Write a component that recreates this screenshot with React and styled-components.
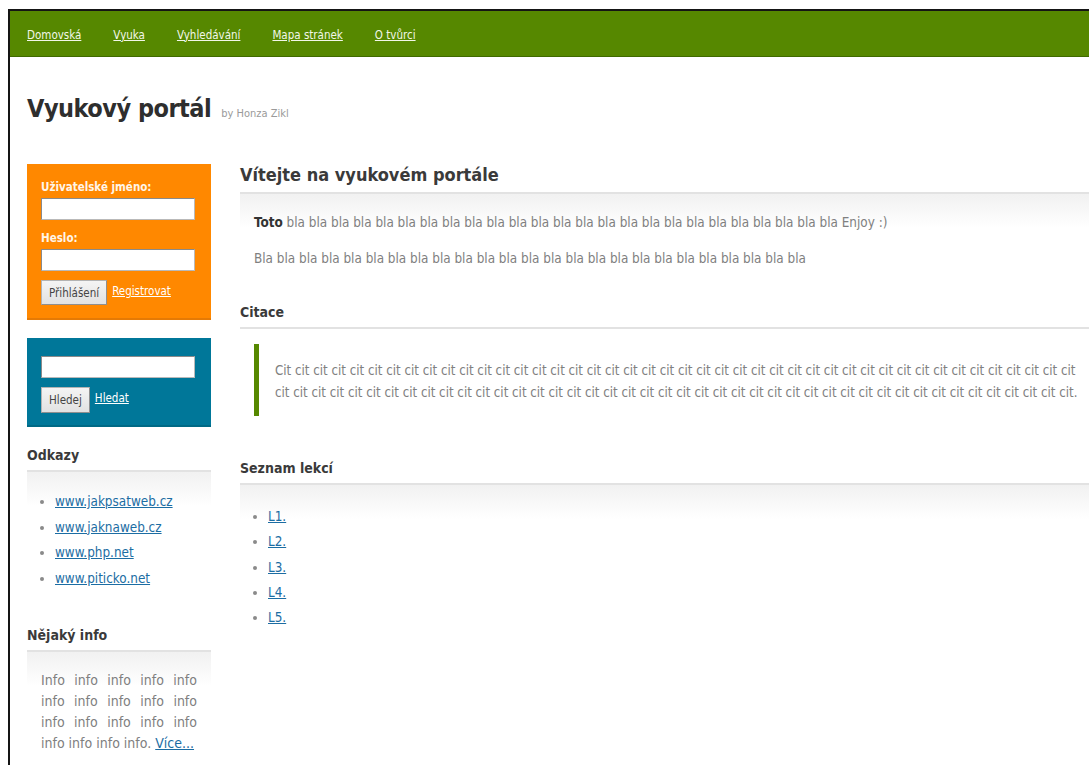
import React from 'react';
import styled, { createGlobalStyle } from 'styled-components';

const GlobalStyle = createGlobalStyle`
  html, body {
    overflow: hidden;
  }
  body {
    margin: 9px 0 0 8px;
    background: #fff;
    font-family: "DejaVu Sans Condensed", "DejaVu Sans", Tahoma, sans-serif;
    color: #7d7d7d;
  }
`;

const Frame = styled.div`
  width: 1107px;
  border-left: 2px solid #151515;
  border-top: 2px solid #151515;
  min-height: 800px;
`;

const NavBar = styled.nav`
  display: flex;
  align-items: center;
  gap: 32px;
  height: 45px;
  padding: 0 17px;
  background: #568800;
  border-bottom: 1px solid #3f6a00;
`;

const NavLink = styled.a`
  color: #f2f7e8;
  font-size: 11.5px;
  text-decoration: underline;
  margin-top: 2px;
`;

const Body = styled.div`
  padding: 0 17px;
`;

const Header = styled.header`
  display: flex;
  align-items: baseline;
  gap: 10px;
  padding-top: 37px;
  height: 70px;
  box-sizing: border-box;
  margin-bottom: 37px;
`;

const Title = styled.h1`
  margin: 0;
  font-size: 25px;
  line-height: 30px;
  font-weight: bold;
  color: #2e2e2e;
  letter-spacing: -0.5px;
`;

const Byline = styled.span`
  font-size: 11px;
  color: #9a9a9a;
`;

const Columns = styled.div`
  display: flex;
  align-items: flex-start;
  gap: 29px;
`;

const Sidebar = styled.aside`
  width: 184px;
  flex-shrink: 0;
`;

const Panel = styled.form`
  display: flex;
  flex-direction: column;
  align-items: flex-start;
  padding: ${p => p.$top}px 14px ${p => p.$bottom}px;
  background: ${p => p.$bg};
  border-bottom: 2px solid ${p => p.$edge};
  margin-bottom: ${p => p.$gap || 0}px;
`;

const Label = styled.label`
  font-size: 11.5px;
  line-height: 16px;
  font-weight: bold;
  color: #fff5e8;
  margin-bottom: 3px;
`;

const TextInput = styled.input`
  box-sizing: border-box;
  width: 154px;
  height: 22px;
  margin: 0 0 ${p => p.$after}px;
  border: 1px solid #b9b9b9;
  border-top-color: #8a8a8a;
  border-left-color: #8a8a8a;
  background: #fff;
`;

const ActionRow = styled.div`
  display: flex;
  align-items: flex-start;
  gap: 5px;
`;

const Button = styled.button`
  box-sizing: border-box;
  height: ${p => p.$h}px;
  padding: 0 7px;
  font-family: inherit;
  font-size: 11.5px;
  color: #444;
  background: linear-gradient(#f4f4f4, #e2e2e2);
  border: 1px solid #b3b3b3;
  border-right-color: #8f8f8f;
  border-bottom-color: #8f8f8f;
`;

const PanelLink = styled.a`
  font-size: 11.5px;
  line-height: 22px;
  color: #fff;
  text-decoration: underline;
`;

const Heading = styled.h3`
  margin: ${p => p.$top}px 0 0;
  padding-bottom: ${p => p.$pad || 5}px;
  font-size: ${p => p.$size || 14}px;
  line-height: ${p => p.$lh || 20}px;
  font-weight: bold;
  color: #3a3a3a;
  border-bottom: 2px solid #e2e2e2;
`;

const Shade = styled.div`
  padding: ${p => p.$top}px ${p => p.$side || 0}px 0;
  background: linear-gradient(#f1f1f1, #fff 34px);
`;

const LinkList = styled.ul`
  margin: 0;
  padding-left: ${p => p.$indent}px;
  list-style: disc;
  color: #8a8a8a;
  font-size: 13.4px;
  line-height: ${p => p.$lh}px;
`;

const ItemLink = styled.a`
  color: #1c6da3;
  text-decoration: underline;
`;

const InfoText = styled.p`
  margin: 0;
  font-size: 14px;
  line-height: 21px;
  text-align: justify;
  color: #808080;
`;

const Main = styled.main`
  flex: 1;
  min-width: 0;
`;

const Para = styled.p`
  margin: 0 0 ${p => p.$after}px;
  padding-left: 14px;
  font-size: 13.4px;
  line-height: 20px;
  color: #808080;

  strong {
    color: #333;
  }
`;

const Quote = styled.blockquote`
  margin: 15px 0 0 14px;
  padding: 16px 8px 12px 16px;
  border-left: 5px solid #568800;
  font-size: 13.2px;
  line-height: 22px;
  color: #808080;
`;

const bla = (n) => Array(n).fill('bla').join(' ');
const cit = Array(87).fill('cit').join(' ');

const navItems = ['Domovská', 'Vyuka', 'Vyhledávání', 'Mapa stránek', 'O tvůrci'];
const links = ['www.jakpsatweb.cz', 'www.jaknaweb.cz', 'www.php.net', 'www.piticko.net'];
const lessons = ['L1.', 'L2.', 'L3.', 'L4.', 'L5.'];

export default function App() {
  return (
    <Frame>
      <GlobalStyle />
      <NavBar>
        {navItems.map(item => <NavLink key={item} href="#">{item}</NavLink>)}
      </NavBar>
      <Body>
        <Header>
          <Title>Vyukový portál</Title>
          <Byline>by Honza Zikl</Byline>
        </Header>
        <Columns>
          <Sidebar>
            <Panel $bg="#ff8800" $edge="#e57a05" $top={15} $bottom={13} $gap={18}>
              <Label>Uživatelské jméno:</Label>
              <TextInput $after={10} />
              <Label>Heslo:</Label>
              <TextInput type="password" $after={9} />
              <ActionRow>
                <Button type="button" $h={25}>Přihlášení</Button>
                <PanelLink href="#">Registrovat</PanelLink>
              </ActionRow>
            </Panel>
            <Panel $bg="#007799" $edge="#006985" $top={18} $bottom={12}>
              <TextInput $after={9} />
              <ActionRow>
                <Button type="button" $h={26}>Hledej</Button>
                <PanelLink href="#">Hledat</PanelLink>
              </ActionRow>
            </Panel>

            <Heading $top={18}>Odkazy</Heading>
            <Shade $top={17}>
              <LinkList $indent={28} $lh={25.6}>
                {links.map(l => <li key={l}><ItemLink href="#">{l}</ItemLink></li>)}
              </LinkList>
            </Shade>

            <Heading $top={34}>Nějaký info</Heading>
            <Shade $top={18} $side={14}>
              <InfoText>
                Info info info info info info info info info info info info info info info
                info info info info. <ItemLink href="#">Více...</ItemLink>
              </InfoText>
            </Shade>
          </Sidebar>

          <Main>
            <Heading $top={0} $size={18} $lh={22} $pad={6}>Vítejte na vyukovém portále</Heading>
            <Shade $top={19}>
              <Para $after={16}><strong>Toto</strong> {bla(25)} Enjoy :)</Para>
              <Para $after={0}>Bla {bla(24)}</Para>
            </Shade>

            <Heading $top={33}>Citace</Heading>
            <Quote>Cit {cit}.</Quote>

            <Heading $top={42}>Seznam lekcí</Heading>
            <Shade $top={19}>
              <LinkList $indent={28} $lh={25.3}>
                {lessons.map(l => <li key={l}><ItemLink href="#">{l}</ItemLink></li>)}
              </LinkList>
            </Shade>
          </Main>
        </Columns>
      </Body>
    </Frame>
  );
}
